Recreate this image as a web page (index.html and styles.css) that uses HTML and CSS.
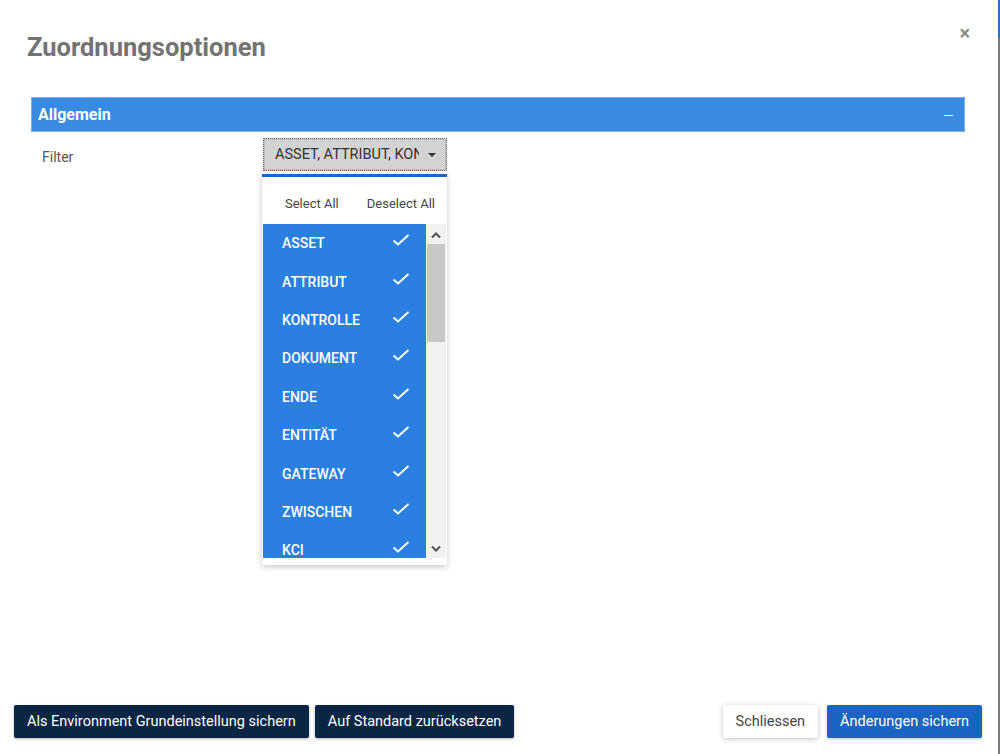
FILE: index.html
```html
<!DOCTYPE html>
<html>
<head>
<meta charset="utf-8">
<link rel="stylesheet" href="styles.css">
</head>
<body>
<div class="frame">
  <div class="modal">
    <div class="header">
      <h2 class="title">Zuordnungsoptionen</h2>
      <span class="close">&times;</span>
    </div>
    <div class="body">
      <div class="section-bar">
        <span class="section-title">Allgemein</span>
        <span class="section-toggle"></span>
      </div>
      <div class="filter-row">
        <label class="filter-label">Filter</label>
        <div class="dropdown">
          <button class="dd-button">
            <span class="dd-text">ASSET, ATTRIBUT, KONTROLLE, DOKUMENT</span>
            <span class="caret"></span>
          </button>
          <div class="dd-menu">
            <div class="dd-actions">
              <span class="dd-action">Select All</span>
              <span class="dd-action">Deselect All</span>
            </div>
            <div class="dd-listwrap">
              <ul class="dd-list">
                <li class="dd-item"><span>ASSET</span><svg class="check" viewBox="0 0 18 12"><polyline points="1.5,6.5 6,10.5 16.5,1"/></svg></li>
                <li class="dd-item"><span>ATTRIBUT</span><svg class="check" viewBox="0 0 18 12"><polyline points="1.5,6.5 6,10.5 16.5,1"/></svg></li>
                <li class="dd-item"><span>KONTROLLE</span><svg class="check" viewBox="0 0 18 12"><polyline points="1.5,6.5 6,10.5 16.5,1"/></svg></li>
                <li class="dd-item"><span>DOKUMENT</span><svg class="check" viewBox="0 0 18 12"><polyline points="1.5,6.5 6,10.5 16.5,1"/></svg></li>
                <li class="dd-item"><span>ENDE</span><svg class="check" viewBox="0 0 18 12"><polyline points="1.5,6.5 6,10.5 16.5,1"/></svg></li>
                <li class="dd-item"><span>ENTITÄT</span><svg class="check" viewBox="0 0 18 12"><polyline points="1.5,6.5 6,10.5 16.5,1"/></svg></li>
                <li class="dd-item"><span>GATEWAY</span><svg class="check" viewBox="0 0 18 12"><polyline points="1.5,6.5 6,10.5 16.5,1"/></svg></li>
                <li class="dd-item"><span>ZWISCHEN</span><svg class="check" viewBox="0 0 18 12"><polyline points="1.5,6.5 6,10.5 16.5,1"/></svg></li>
                <li class="dd-item"><span>KCI</span><svg class="check" viewBox="0 0 18 12"><polyline points="1.5,6.5 6,10.5 16.5,1"/></svg></li>
              </ul>
              <div class="scrollbar">
                <svg class="sb-arrow" viewBox="0 0 10 6"><polyline points="1,5.5 5,1.5 9,5.5"/></svg>
                <div class="sb-thumb"></div>
                <div class="sb-spacer"></div>
                <svg class="sb-arrow" viewBox="0 0 10 6"><polyline points="1,0.5 5,4.5 9,0.5"/></svg>
              </div>
            </div>
          </div>
        </div>
      </div>
    </div>
    <div class="footer">
      <div class="footer-left">
        <button class="btn btn-dark">Als Environment Grundeinstellung sichern</button>
        <button class="btn btn-dark">Auf Standard zurücksetzen</button>
      </div>
      <div class="footer-right">
        <button class="btn btn-light">Schliessen</button>
        <button class="btn btn-primary">Änderungen sichern</button>
      </div>
    </div>
  </div>
  <div class="edge">
    <div class="edge-top"></div>
    <div class="edge-rest"></div>
  </div>
</div>
</body>
</html>
```

FILE: styles.css
```css
* { box-sizing: border-box; }
html, body { margin: 0; padding: 0; }
body {
  font-family: Roboto, "Liberation Sans", Arial, sans-serif;
  background: #ffffff;
  width: 1000px;
  height: 754px;
  overflow: hidden;
}
.frame {
  display: flex;
  width: 1000px;
  height: 754px;
}
.modal {
  width: 998px;
  height: 754px;
  display: flex;
  flex-direction: column;
  background: #fff;
}
.edge {
  width: 2px;
  display: flex;
  flex-direction: column;
}
.edge-top { height: 38px; background: #2d6fc4; }
.edge-rest { flex: 1; background: #7a7a7a; }

.header {
  display: flex;
  justify-content: space-between;
  align-items: flex-start;
  padding: 32px 28px 0 27px;
  height: 97px;
}
.title {
  margin: 0;
  font-size: 25.5px;
  font-weight: 700;
  line-height: 30px;
  color: #737373;
}
.close {
  font-size: 20px;
  line-height: 20px;
  margin-top: -9px;
  color: #8a8a8a;
  font-weight: 700;
}

.body {
  flex: 1;
  padding: 0 33px 0 31px;
}
.section-bar {
  height: 35px;
  background: #3a8ae2;
  border: 1px solid #78b0ee;
  display: flex;
  align-items: center;
  justify-content: space-between;
  padding: 0 11px 0 6px;
}
.section-title {
  color: #fff;
  font-weight: 700;
  font-size: 16px;
}
.section-toggle {
  width: 9px;
  height: 1.5px;
  background: #fff;
  margin-top: 2px;
}
.filter-row {
  display: flex;
  margin-top: 6px;
}
.filter-label {
  width: 231px;
  padding: 11px 0 0 11px;
  font-size: 14px;
  color: #555;
}
.dropdown {
  position: relative;
  width: 185px;
}
.dd-button {
  width: 184px;
  height: 33px;
  margin-left: 1px;
  background: #d3d3d3;
  border: 1px dotted #6a6a6a;
  box-shadow: inset 0 0 0 1px #bcbcbc;
  display: flex;
  align-items: center;
  padding: 0 10px 0 11px;
  font-family: inherit;
  cursor: pointer;
}
.dd-text {
  flex: 1;
  font-size: 14.5px;
  color: #333;
  white-space: nowrap;
  overflow: hidden;
  text-align: left;
  width: 145px;
  margin-right: 9px;
}
.caret {
  width: 0;
  height: 0;
  border-left: 4px solid transparent;
  border-right: 4px solid transparent;
  border-top: 4px solid #333;
}
.dd-menu {
  position: absolute;
  top: 36px;
  left: 0;
  width: 185px;
  background: #fff;
  border-top: 3px solid #1f66c1;
  box-shadow: 0 2px 6px rgba(0,0,0,0.22);
  padding-bottom: 7px;
  z-index: 10;
}
.dd-actions {
  display: flex;
  justify-content: space-between;
  padding: 19px 12px 0 23px;
  height: 47px;
  font-size: 13px;
  color: #444;
}
.dd-listwrap {
  display: flex;
  height: 334px;
  margin-left: 1px;
}
.dd-list {
  list-style: none;
  margin: 0;
  padding: 0;
  width: 163px;
  background: #2a7fe1;
  overflow: hidden;
}
.dd-item {
  height: 38.4px;
  flex-shrink: 0;
  display: flex;
  align-items: center;
  justify-content: space-between;
  padding: 0 16px 0 19px;
  color: #fff;
  font-size: 14px;
  font-weight: 500;
}
.check {
  width: 18px;
  height: 12px;
  margin-top: -6px;
  fill: none;
  stroke: #fff;
  stroke-width: 2;
}
.scrollbar {
  width: 20px;
  background: #f1f1f1;
  display: flex;
  flex-direction: column;
  align-items: center;
}
.sb-arrow {
  width: 10px;
  height: 6px;
  fill: none;
  stroke: #505050;
  stroke-width: 2;
  margin: 8px 0 6px;
}
.sb-thumb {
  width: 18px;
  height: 98px;
  background: #c8c8c8;
}
.sb-spacer { flex: 1; }

.footer {
  display: flex;
  justify-content: space-between;
  align-items: flex-end;
  padding: 0 16px 16px 14px;
}
.footer-left, .footer-right {
  display: flex;
  gap: 6px;
}
.footer-right { gap: 9px; }
.btn {
  height: 33px;
  border: none;
  border-radius: 2px;
  font-family: inherit;
  font-size: 14.5px;
  padding: 0 13px;
  cursor: pointer;
}
.btn-dark {
  background: #0b2545;
  color: #fff;
  box-shadow: 0 1px 3px rgba(0,0,0,0.3);
}
.btn-light {
  background: #fff;
  color: #444;
  box-shadow: 0 1px 5px rgba(0,0,0,0.25);
  padding: 0 13px;
}
.btn-primary {
  background: #1a65c1;
  color: #fff;
  box-shadow: 0 1px 3px rgba(0,0,0,0.25);
}
```
